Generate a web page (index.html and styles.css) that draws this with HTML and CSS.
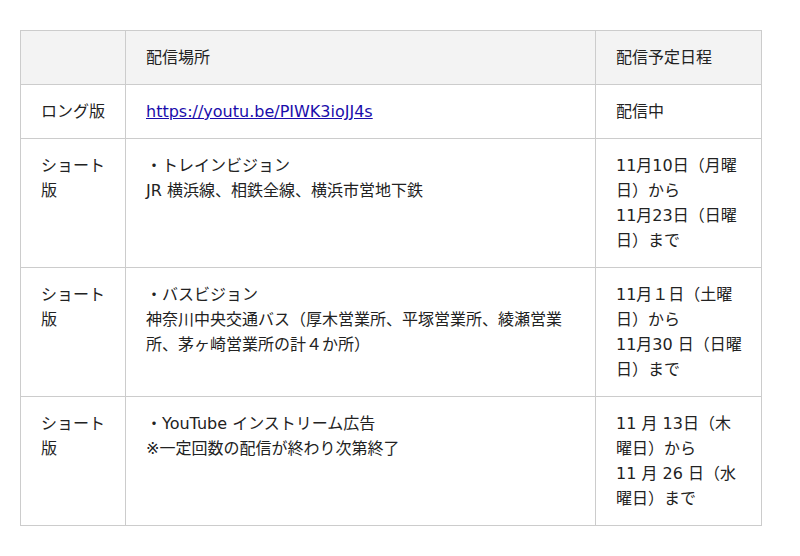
FILE: index.html
```html
<!DOCTYPE html>
<html lang="ja">
<head>
<meta charset="utf-8">
<title>配信スケジュール</title>
<link rel="stylesheet" href="styles.css">
</head>
<body>
<table class="schedule">
  <colgroup>
    <col class="c-type">
    <col class="c-place">
    <col class="c-date">
  </colgroup>
  <thead>
    <tr>
      <th></th>
      <th>配信場所</th>
      <th class="date">配信予定日程</th>
    </tr>
  </thead>
  <tbody>
    <tr>
      <td>ロング版</td>
      <td><a href="#">https://youtu.be/PIWK3ioJJ4s</a></td>
      <td class="date">配信中</td>
    </tr>
    <tr>
      <td>ショート版</td>
      <td>・トレインビジョン<br>JR 横浜線、相鉄全線、横浜市営地下鉄</td>
      <td class="date">11月10日（月曜日）から<br>11月23日（日曜日）まで</td>
    </tr>
    <tr>
      <td>ショート版</td>
      <td>・バスビジョン<br>神奈川中央交通バス（厚木営業所、平塚営業所、綾瀬営業所、茅ヶ崎営業所の計４か所）</td>
      <td class="date">11月１日（土曜日）から<br>11月30 日（日曜日）まで</td>
    </tr>
    <tr>
      <td>ショート版</td>
      <td>・YouTube インストリーム広告<br>※一定回数の配信が終わり次第終了</td>
      <td class="date">11 月 13日（木曜日）から<br>11 月 26 日（水曜日）まで</td>
    </tr>
  </tbody>
</table>
</body>
</html>
```

FILE: styles.css
```css
html, body {
  margin: 0;
  padding: 0;
  background: #ffffff;
}
body {
  padding: 30px 20px;
  font-family: "DejaVu Sans", "Noto Sans CJK JP", sans-serif;
  font-size: 16px;
  line-height: 25px;
  color: #222222;
}
.schedule {
  border-collapse: collapse;
  table-layout: fixed;
  width: 741px;
}
.c-type { width: 105px; }
.c-place { width: 470px; }
.c-date { width: 166px; }
.schedule th,
.schedule td {
  border: 1px solid #cccccc;
  padding: 14px 20px;
  text-align: left;
  vertical-align: top;
  font-weight: normal;
  word-break: break-all;
}
.schedule .date {
  padding-right: 17px;
}
.schedule th {
  background: #f3f3f3;
}
.schedule a {
  color: #1a0dab;
  text-decoration: underline;
}
```
